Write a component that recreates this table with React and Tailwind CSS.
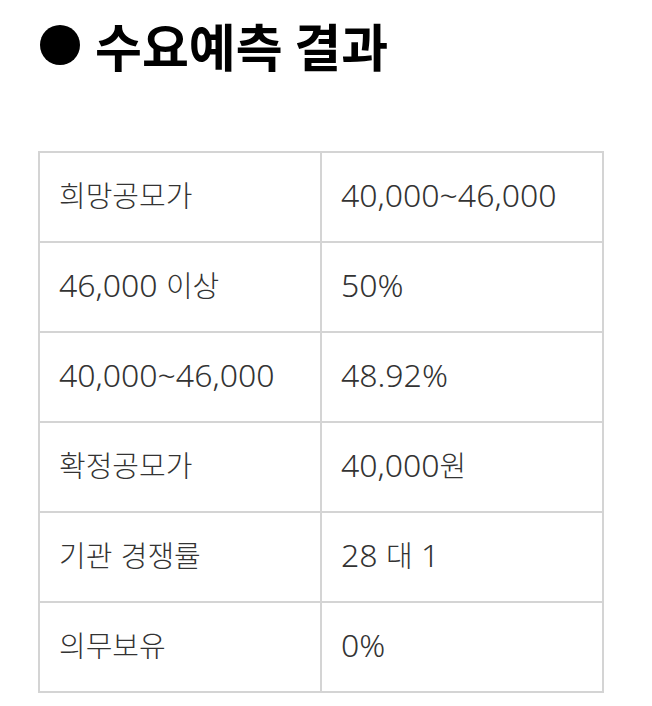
import React from "react";

const rows = [
  ["희망공모가", "40,000~46,000"],
  ["46,000 이상", "50%"],
  ["40,000~46,000", "48.92%"],
  ["확정공모가", "40,000원"],
  ["기관 경쟁률", "28 대 1"],
  ["의무보유", "0%"],
];

// hangul in this shot runs narrower than the digits, so shrink it a bit
const Txt = ({ text }) =>
  text.split(/([\uAC00-\uD7A3]+)/).map((part, i) =>
    /[\uAC00-\uD7A3]/.test(part) ? (
      <span key={i} className="text-[29px]">
        {part}
      </span>
    ) : (
      <span key={i}>{part}</span>
    ),
  );

const App = () => {
  return (
    <div className="w-[652px] h-[706px] bg-white overflow-hidden font-['Noto_Sans','Noto_Sans_CJK_KR',sans-serif]">
      <h1 className="flex items-center gap-[15px] pl-[40px] pt-[14px] h-[76px] text-[51px] font-bold text-black leading-none font-['Noto_Sans_CJK_KR',sans-serif]">
        <span className="inline-block w-10 h-10 rounded-full bg-black shrink-0" />
        <span>수요예측 결과</span>
      </h1>
      <table className="ml-[38px] mt-[75px] w-[566px] border-collapse table-fixed">
        <tbody>
          {rows.map(([label, value]) => (
            <tr key={label} className="h-[90px]">
              <td className="border-2 border-[#d4d4d4] pl-[19px] pb-[4px] text-[32px] font-light text-[#333] align-middle">
                <Txt text={label} />
              </td>
              <td className="border-2 border-[#d4d4d4] pl-[19px] pb-[4px] text-[32px] font-light text-[#333] align-middle">
                <Txt text={value} />
              </td>
            </tr>
          ))}
        </tbody>
      </table>
    </div>
  );
};

export default App;
